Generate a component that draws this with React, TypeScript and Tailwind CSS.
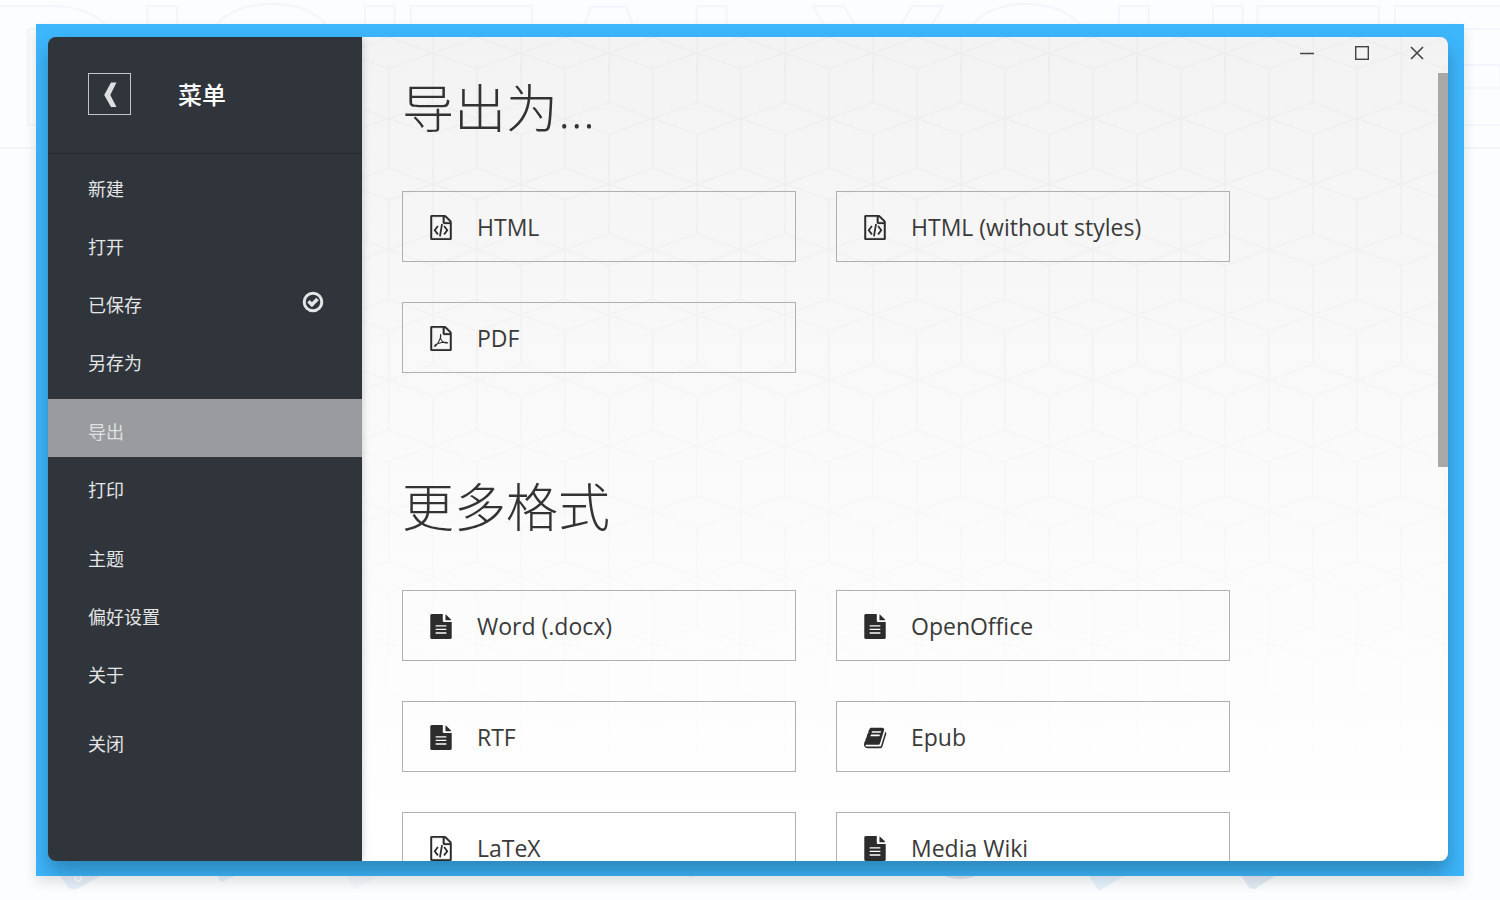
import React from 'react';

type IconName = 'code' | 'pdf' | 'text' | 'book';

interface ExportFormat {
  label: string;
  icon: IconName;
}

interface MenuItem {
  label: string;
  active?: boolean;
  saved?: boolean;
}

// Menu entries, grouped by the gaps between them
const MENU_GROUPS: MenuItem[][] = [
  [{ label: '新建' }, { label: '打开' }, { label: '已保存', saved: true }, { label: '另存为' }],
  [{ label: '导出', active: true }, { label: '打印' }],
  [{ label: '主题' }, { label: '偏好设置' }, { label: '关于' }],
  [{ label: '关闭' }],
];

const SECTIONS: { title: string; formats: ExportFormat[] }[] = [
  {
    title: '导出为...',
    formats: [
      { label: 'HTML', icon: 'code' },
      { label: 'HTML (without styles)', icon: 'code' },
      { label: 'PDF', icon: 'pdf' },
    ],
  },
  {
    title: '更多格式',
    formats: [
      { label: 'Word (.docx)', icon: 'text' },
      { label: 'OpenOffice', icon: 'text' },
      { label: 'RTF', icon: 'text' },
      { label: 'Epub', icon: 'book' },
      { label: 'LaTeX', icon: 'code' },
      { label: 'Media Wiki', icon: 'text' },
    ],
  },
];

const PAGE_OUTLINE =
  'M1468 380q28 28 48 76t20 88v1152q0 40-28 68t-68 28h-1344q-40 0-68-28t-28-68v-1600q0-40 28-68t68-28h896q40 0 88 20t76 48zm-444-244v376h376q-10-29-22-41l-313-313q-12-12-41-22zm384 1528v-1024h-416q-40 0-68-28t-28-68v-416h-768v1536h1280z';

function FormatIcon({ name }: { name: IconName }) {
  if (name === 'book') {
    return (
      <svg viewBox="0 0 1792 1792" className="h-6 w-6 shrink-0" fill="currentColor" aria-hidden="true">
        <path d="M1639 478q40 57 18 129l-275 906q-19 64-76.5 107.5t-122.5 43.5h-923q-77 0-148.5-53.5t-99.5-131.5q-24-67-2-127 0-4 3-27t4-37q1-8-3-21.5t-3-19.5q2-11 8-21t16.5-23.5 16.5-23.5q23-38 45-91.5t30-91.5q3-10 .5-30t-.5-28q3-11 17-28t17-23q21-36 42-92t25-90q1-9-2.5-32t.5-28q4-13 22-30.5t22-22.5q19-26 42.5-84.5t27.5-96.5q1-8-3-25.5t-2-26.5q2-8 9-18t18-23 17-21q8-12 16.5-30.5t15-35 16-36 19.5-32 26.5-23.5 36-11.5 47.5 5.5l-1 3q38-9 51-9h761q74 0 114 56t18 130l-274 906q-36 119-71.5 153.5t-128.5 34.5h-869q-27 0-38 15-11 16-1 43 24 70 144 70h923q29 0 56-15.5t35-41.5l300-987q7-22 5-57 38 15 59 43zm-1064 2q-4 13 2 22.5t20 9.5h608q13 0 25.5-9.5t16.5-22.5l21-64q4-13-2-22.5t-20-9.5h-608q-13 0-25.5 9.5t-16.5 22.5zm-83 256q-4 13 2 22.5t20 9.5h608q13 0 25.5-9.5t16.5-22.5l21-64q4-13-2-22.5t-20-9.5h-608q-13 0-25.5 9.5t-16.5 22.5z" />
      </svg>
    );
  }

  return (
    <svg viewBox="0 0 1536 1792" className="h-[25px] w-[22px] shrink-0" fill="currentColor" aria-hidden="true">
      {name === 'text' && (
        <path
          fillRule="evenodd"
          d="M1468 380q22 22 40 68h-420v-420q46 18 68 40zM992 576h544v1120q0 40-28 68t-68 28h-1344q-40 0-68-28t-28-68v-1600q0-40 28-68t68-28h800v480q0 40 28 68t68 28zM384 800v96h768v-96zM384 1056v96h768v-96zM384 1312v96h768v-96z"
        />
      )}
      {name !== 'text' && <path d={PAGE_OUTLINE} stroke="currentColor" strokeWidth="20" />}
      {name === 'code' && (
        <path d="M480 768q8-11 21-12.5t24 6.5l51 38q11 8 12.5 21t-6.5 24l-182 243 182 243q8 11 6.5 24t-12.5 21l-51 38q-11 8-24 6.5t-21-12.5l-226-301q-14-19 0-38zM1282 1069q14 19 0 38l-226 301q-8 11-21 12.5t-24-6.5l-51-38q-11-8-12.5-21t6.5-24l182-243-182-243q-8-11-6.5-24t12.5-21l51-38q11-8 24-6.5t21 12.5zM662 1530q-13-2-20.5-13t-5.5-24l138-831q2-13 13-20.5t24-5.5l63 10q13 2 20.5 13t5.5 24l-138 831q-2 13-13 20.5t-24 5.5z" />
      )}
      {name === 'pdf' && (
        <g fill="none" stroke="currentColor" strokeWidth="72" strokeLinecap="round" strokeLinejoin="round">
          <path d="M740 600q-50 170 30 370 90 190 260 230 190 50 220 10-60-90-420-30-240 40-400 130-160 110-120 150 80 10 230-230 160-280 210-460 20-110-10-170z" />
        </g>
      )}
    </svg>
  );
}

function SavedIcon() {
  return (
    <svg viewBox="0 0 22 22" className="h-[22px] w-[22px]" fill="none" stroke="#e4e5e6" aria-hidden="true">
      <circle cx="11" cy="11" r="8.800" strokeWidth="3" />
      <path d="M6.500 10.300l3.400 3.400 5.600-5.600" strokeWidth="3.600" />
    </svg>
  );
}

// Isometric cube lines behind the export list, fading out downwards
function CubePattern() {
  return (
    <svg className="pointer-events-none absolute inset-0 h-full w-full" aria-hidden="true">
      <defs>
        <pattern id="cubes" width="88" height="131" x="-17" y="16" patternUnits="userSpaceOnUse">
          <path
            d="M0 0L44 -16L88 0L44 16ZM0 131L44 115L88 131L44 147ZM-44 65.5L0 49.5L44 65.5L0 81.5ZM44 65.5L88 49.5L132 65.5L88 81.5ZM44 16V115M0 0V49.5M88 0V49.5M0 81.5V131M88 81.5V131"
            fill="none"
            stroke="#ededed"
            strokeWidth="1.6"
          />
        </pattern>
        <linearGradient id="fade" x1="0" y1="0" x2="0" y2="1">
          <stop offset="0" stopColor="#fff" />
          <stop offset="0.3" stopColor="#fff" stopOpacity="0.5" />
          <stop offset="0.6" stopColor="#fff" stopOpacity="0.2" />
          <stop offset="0.9" stopColor="#fff" stopOpacity="0" />
        </linearGradient>
        <mask id="fade-mask">
          <rect width="100%" height="100%" fill="url(#fade)" />
        </mask>
      </defs>
      <rect width="100%" height="100%" fill="url(#cubes)" mask="url(#fade-mask)" />
    </svg>
  );
}

function Backdrop() {
  return (
    <div className="pointer-events-none absolute inset-0 overflow-hidden" aria-hidden="true">
      <div className="-mt-[35px] -ml-[15px] whitespace-nowrap font-['Liberation_Sans',sans-serif] text-[206px] leading-[224px] font-bold text-transparent [-webkit-text-stroke:2px_#f2f6fd] [font-kerning:none]">
        DIGITALYOUTE
      </div>
      <svg className="absolute bottom-0 left-0 h-8 w-full" viewBox="0 0 1500 32" preserveAspectRatio="xMidYMax slice">
        <path d="M59 6L66 17Q71 24 79 20L104 6Z" fill="#e6f0fa" />
        <circle cx="78" cy="10" r="3" fill="none" stroke="#fff" strokeWidth="1.5" />
        <path d="M216 6L221 14L240 6Z" fill="#e3f2fc" />
        <path d="M346 8L355 21L378 8Z" fill="#f5f9fd" />
        <circle cx="691" cy="5" r="4" fill="#e3f2fc" />
        <path d="M940 6Q960 16 980 6Z" fill="#e0e7f0" />
        <path d="M1088 6L1099 23L1127 6Z" fill="#e6f3fd" />
        <path d="M1240 6L1248 18Q1252 24 1258 19L1278 6Z" fill="#e2ebf5" />
      </svg>
    </div>
  );
}

function Sidebar() {
  return (
    <aside className="z-10 flex w-[314px] shrink-0 flex-col bg-[#30343b] text-[#e4e5e6] shadow-[0_0_8px_rgba(0,0,0,0.2)]">
      <div className="flex h-[117px] items-start gap-[47px] border-b border-[#24292f] pt-9 pl-10">
        <button
          type="button"
          aria-label="Back"
          className="flex h-[42px] w-[43px] items-center justify-center border border-[#c4c5c7]"
        >
          <svg viewBox="0 0 14 26" className="h-[26px] w-[14px]" fill="#dddedf" aria-hidden="true">
            <path d="M8 1.500h5.500L7.300 14l6.200 12H8L1.200 14z" />
          </svg>
        </button>
        <h2 className="text-2xl leading-[44px] font-medium text-white">菜单</h2>
      </div>
      <nav className="flex flex-col gap-[11px] pt-[2px]">
        {MENU_GROUPS.map((group) => (
          <ul key={group[0].label}>
            {group.map((item) => (
              <li key={item.label}>
                <a
                  href="#"
                  aria-current={item.active ? 'page' : undefined}
                  className={`flex h-[58px] items-center justify-between pr-[38px] pl-10 ${
                    item.active ? 'bg-[#999b9e] text-[#dfe0e1]' : ''
                  }`}
                >
                  <span className="pt-2 text-[18px] leading-6">{item.label}</span>
                  {item.saved && (
                    <span className="pt-[2px]">
                      <SavedIcon />
                    </span>
                  )}
                </a>
              </li>
            ))}
          </ul>
        ))}
      </nav>
    </aside>
  );
}

function WindowControls() {
  return (
    <div className="flex h-9 shrink-0 items-center justify-end gap-[27px] pr-[17px] pb-1 text-[#444]">
      <button type="button" aria-label="Minimize" className="flex h-7 w-7 items-center justify-center">
        <svg viewBox="0 0 14 14" className="h-[14px] w-[14px]" aria-hidden="true">
          <path d="M0 7.500h14" stroke="currentColor" strokeWidth="1.4" />
        </svg>
      </button>
      <button type="button" aria-label="Maximize" className="flex h-7 w-7 items-center justify-center">
        <svg viewBox="0 0 14 14" className="h-[14px] w-[14px]" fill="none" aria-hidden="true">
          <rect x="0.700" y="0.700" width="12.600" height="12.600" stroke="currentColor" strokeWidth="1.4" />
        </svg>
      </button>
      <button type="button" aria-label="Close" className="flex h-7 w-7 items-center justify-center">
        <svg viewBox="0 0 14 14" className="h-[14px] w-[14px]" aria-hidden="true">
          <path d="M1 1l12 12M13 1L1 13" stroke="currentColor" strokeWidth="1.6" />
        </svg>
      </button>
    </div>
  );
}

export default function App() {
  return (
    <div className="relative h-screen bg-[#fcfdff] px-9 py-6 font-['Open_Sans','Noto_Sans_CJK_SC',sans-serif]">
      <Backdrop />
      <div className="relative h-full bg-[#3db6fc] pt-[13px] pr-4 pb-[15px] pl-3 shadow-[0_6px_12px_rgba(0,0,0,0.12)]">
        {/* Window shadow stays inside the blue frame */}
        <div className="absolute inset-0 overflow-hidden pt-[13px] pr-4 pb-[15px] pl-3" aria-hidden="true">
          <div className="h-full rounded-lg shadow-[0_12px_20px_rgba(0,0,0,0.26)]" />
        </div>
        <div className="relative flex h-full overflow-hidden rounded-lg">
          <Sidebar />
          <div className="relative flex min-w-0 flex-1 flex-col bg-linear-to-b from-[#f3f3f3] via-[#fafafa] to-white">
            <CubePattern />
            <div className="relative flex min-h-0 flex-1 flex-col">
              <WindowControls />
              <div className="flex min-h-0 flex-1">
                <main className="min-w-0 flex-1 overflow-hidden pl-10">
                  {SECTIONS.map((section) => (
                    <section key={section.title} className="mb-[99px]">
                      <h1 className="mb-12 text-[52px] leading-[70px] font-light text-[#333]">
                        {section.title}
                      </h1>
                      <div className="grid max-w-[828px] grid-cols-2 gap-10">
                        {section.formats.map((format) => (
                          <button
                            key={format.label}
                            type="button"
                            className="flex h-[71px] items-center border border-[#b0b0b0] pt-[2px] pl-[27px] text-[23px] text-[#3a3a3a]"
                          >
                            <span className="flex w-[47px] text-[#2c2c2c]">
                              <FormatIcon name={format.icon} />
                            </span>
                            <span>{format.label}</span>
                          </button>
                        ))}
                      </div>
                    </section>
                  ))}
                </main>
                {/* Scrollbar thumb */}
                <div className="h-1/2 w-[10px] shrink-0 bg-[#a8a8a8]" />
              </div>
            </div>
          </div>
        </div>
      </div>
    </div>
  );
}
